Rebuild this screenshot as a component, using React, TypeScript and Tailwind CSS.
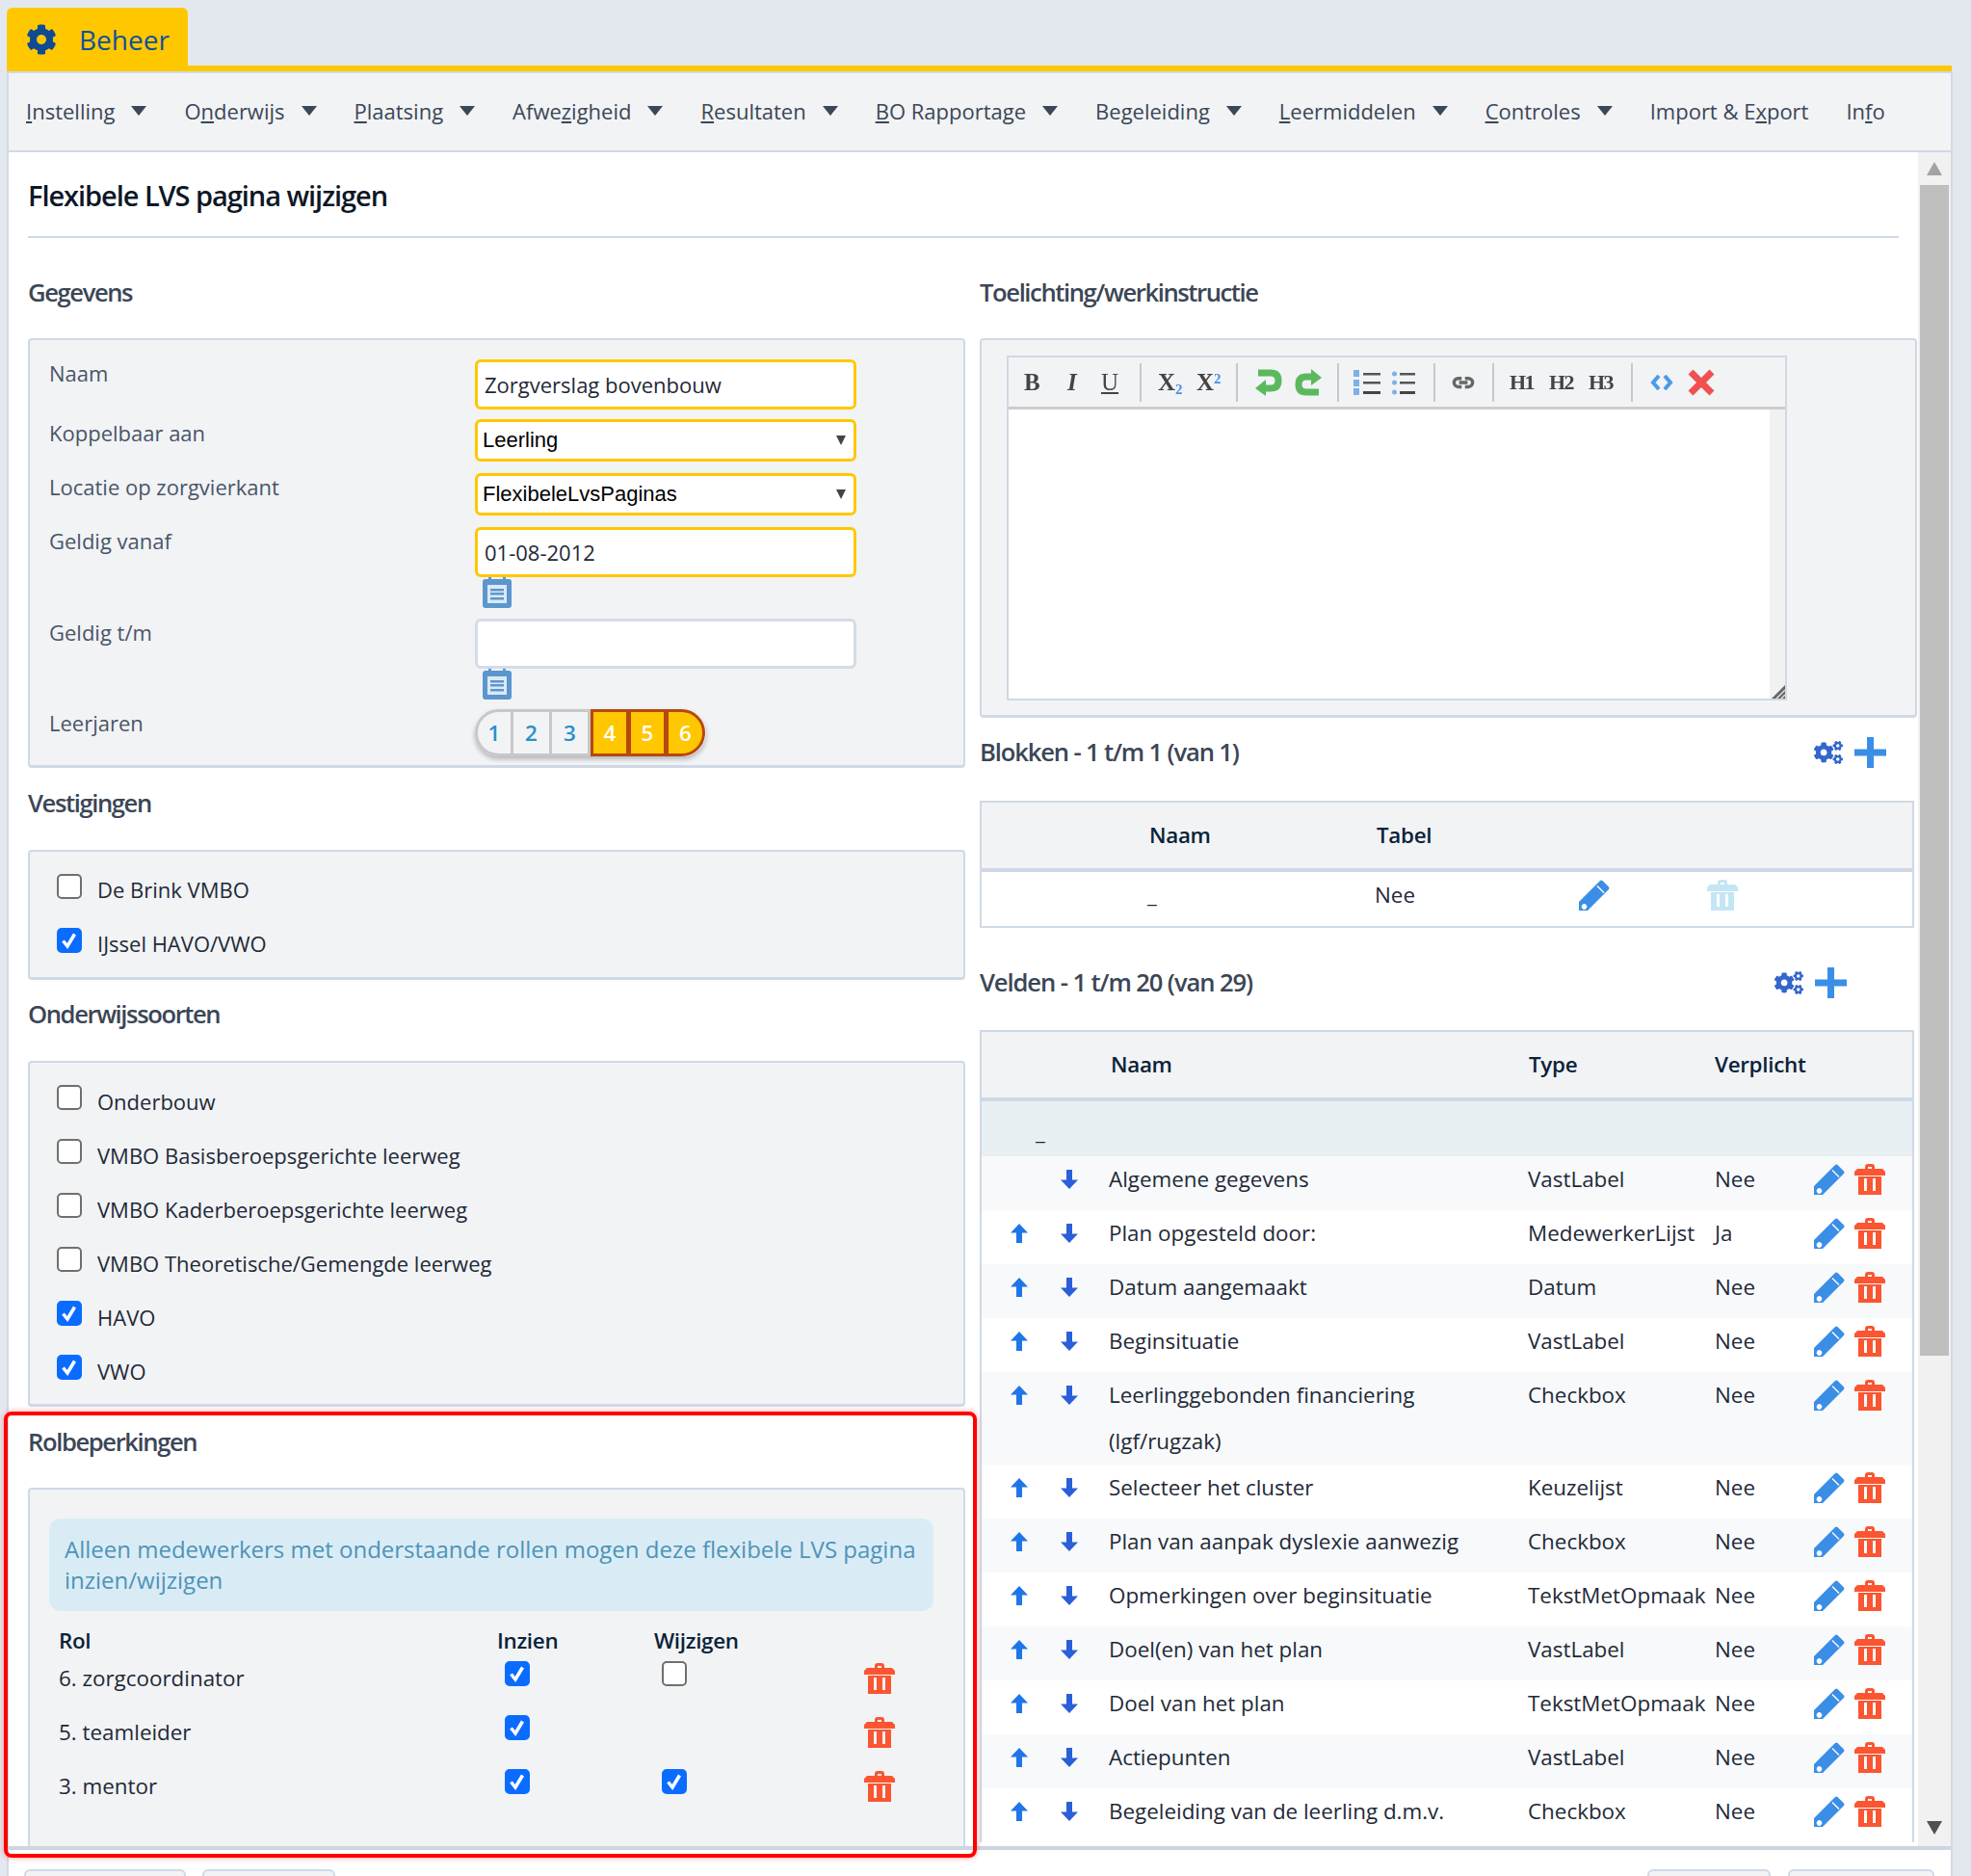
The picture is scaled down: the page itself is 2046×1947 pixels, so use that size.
import { FaCog, FaCogs } from "react-icons/fa";

const navItems = [
  { pre: "", key: "I", post: "nstelling", arrow: true },
  { pre: "O", key: "n", post: "derwijs", arrow: true },
  { pre: "", key: "P", post: "laatsing", arrow: true },
  { pre: "Afwe", key: "z", post: "igheid", arrow: true },
  { pre: "", key: "R", post: "esultaten", arrow: true },
  { pre: "", key: "B", post: "O Rapportage", arrow: true },
  { pre: "Be", key: "g", post: "eleiding", arrow: true },
  { pre: "", key: "L", post: "eermiddelen", arrow: true },
  { pre: "", key: "C", post: "ontroles", arrow: true },
  { pre: "Import & E", key: "x", post: "port", arrow: false },
  { pre: "In", key: "f", post: "o", arrow: false },
];

const velden = [
  { naam: "Algemene gegevens", type: "VastLabel", verplicht: "Nee", noUp: true },
  { naam: "Plan opgesteld door:", type: "MedewerkerLijst", verplicht: "Ja" },
  { naam: "Datum aangemaakt", type: "Datum", verplicht: "Nee" },
  { naam: "Beginsituatie", type: "VastLabel", verplicht: "Nee" },
  { naam: "Leerlinggebonden financiering (lgf/rugzak)", type: "Checkbox", verplicht: "Nee" },
  { naam: "Selecteer het cluster", type: "Keuzelijst", verplicht: "Nee" },
  { naam: "Plan van aanpak dyslexie aanwezig", type: "Checkbox", verplicht: "Nee" },
  { naam: "Opmerkingen over beginsituatie", type: "TekstMetOpmaak", verplicht: "Nee" },
  { naam: "Doel(en) van het plan", type: "VastLabel", verplicht: "Nee" },
  { naam: "Doel van het plan", type: "TekstMetOpmaak", verplicht: "Nee" },
  { naam: "Actiepunten", type: "VastLabel", verplicht: "Nee" },
  { naam: "Begeleiding van de leerling d.m.v.", type: "Checkbox", verplicht: "Nee" },
];

const rollen = [
  { naam: "6. zorgcoordinator", inzien: true, wijzigen: false as boolean | null },
  { naam: "5. teamleider", inzien: true, wijzigen: null },
  { naam: "3. mentor", inzien: true, wijzigen: true },
];

function Trash({ className }: { className: string }) {
  return (
    <svg viewBox="0 0 32 32" className={className}>
      <path
        fill="currentColor"
        fillRule="evenodd"
        d="M11 5V3q0-3 3-3h4q3 0 3 3v2h8l3 3v4H0V8l3-3zM14 5h4V3h-4zM4 13h24v19H4zM10 15v13h3V15zM19 15v13h3V15z"
      />
    </svg>
  );
}

function Pencil({ className }: { className: string }) {
  return (
    <svg viewBox="0 0 32 32" className={className}>
      <path
        fill="currentColor"
        fillRule="evenodd"
        d="M0 32V23L22 1q1-1 2.500 0L31 7.500q1 1.500 0 2.500L9 32zM3 26.500q2.500-2.500 4.500-.5t-.5 4.500q-2 1-3.500-.500T3 26.500zM18.500 7l7 7 1-1-7-7z"
      />
    </svg>
  );
}

function Calendar() {
  return (
    <svg viewBox="0 0 30 32" className="block h-[32px] w-[30px]">
      <path
        fill="#5b96cf"
        d="M3 2h3V0h3v2h12V0h3v2h3q3 0 3 3v24q0 3-3 3H3q-3 0-3-3V5q0-3 3-3z"
      />
      <rect x="5" y="8" width="20" height="19" fill="#dce9f5" />
      <rect x="8" y="12" width="14" height="2.500" fill="#5b96cf" />
      <rect x="8" y="16" width="14" height="2.500" fill="#5b96cf" />
      <rect x="8" y="21" width="14" height="2.500" fill="#5b96cf" />
    </svg>
  );
}

function ArrowUp() {
  return (
    <svg viewBox="0 0 18 20" className="block h-[20px] w-[18px] text-[#1f76e8]">
      <path fill="currentColor" d="M9 0l9 9.500h-6V20H6V9.500H0z" />
    </svg>
  );
}

function ArrowDown() {
  return (
    <svg viewBox="0 0 18 20" className="block h-[20px] w-[18px] text-[#2b5fd9]">
      <path fill="currentColor" d="M9 20L0 10.500h6V0h6v10.500h6z" />
    </svg>
  );
}

function Plus() {
  return (
    <svg viewBox="0 0 33 32" className="block h-[32px] w-[33px] text-[#3a8ee6]">
      <path fill="currentColor" d="M13 0h7v12.500h13v7H20V32h-7V19.500H0v-7h13z" />
    </svg>
  );
}

function Check({ checked }: { checked: boolean }) {
  return (
    <span className="relative block h-[26px] w-[26px] shrink-0">
      <input
        type="checkbox"
        readOnly
        checked={checked}
        className="block h-[26px] w-[26px] appearance-none rounded-[5px] border-2 border-[#6f6f6f] bg-white checked:border-[#0a6cff] checked:bg-[#0a6cff]"
      />
      {checked && (
        <svg viewBox="0 0 26 26" className="pointer-events-none absolute left-0 top-0 h-[26px] w-[26px]">
          <path fill="none" stroke="#fff" strokeWidth="3.500" d="M6.500 13.500l4.500 5.500 7.500-12.500" />
        </svg>
      )}
    </span>
  );
}

function Heading({ children, className }: { children: React.ReactNode; className: string }) {
  return (
    <h2 className={`flex items-center text-[25.6px] font-[550] text-[#3b4656] ${className}`}>
      {children}
    </h2>
  );
}

function Label({ children }: { children: React.ReactNode }) {
  return <div className="-mt-[2px] w-[442px] shrink-0 text-[22px] leading-[32px] text-[#4a5568]">{children}</div>;
}

function SelectField({ value }: { value: string }) {
  return (
    <div className="relative h-[44px] w-[396px]">
      <select
        defaultValue={value}
        className="h-full w-full appearance-none rounded-[6px] border-[3px] border-[#ffc700] bg-white pb-[1px] pl-[5px] font-['Liberation_Sans',sans-serif] text-[22px] text-black"
      >
        <option>{value}</option>
      </select>
      <svg viewBox="0 0 10 10" className="pointer-events-none absolute right-[11px] top-[17px] h-[10px] w-[10px]">
        <path fill="#444" d="M0 0h10L5 10z" />
      </svg>
    </div>
  );
}

function CheckRow({ label, checked, low }: { label: string; checked: boolean; low?: boolean }) {
  return (
    <div className="flex h-[56px] items-center gap-[16px]">
      <div className="-mt-[10px]">
        <Check checked={checked} />
      </div>
      <span className={`text-[22px] text-[#1f2937] ${low ? "-mt-[2px]" : "-mt-[3px]"}`}>{label}</span>
    </div>
  );
}

function Separator() {
  return <div className="h-[40px] w-[2px] bg-[#c8c8c8]" />;
}

function Toolbar() {
  const serif = "font-['Liberation_Serif',serif] text-[25px] text-[#444] leading-none";
  return (
    <div className="flex h-[54px] items-center border-b-[3px] border-[#cccccc] pl-[16px] blur-[0.4px]">
      <span className={`${serif} w-[45px] font-bold`}>B</span>
      <span className={`${serif} w-[35px] font-bold italic`}>I</span>
      <span className={`${serif} w-[40px] underline`}>U</span>
      <Separator />
      <span className={`${serif} ml-[17px] w-[40px] font-bold`}>
        X<sub className="text-[15px] text-[#4a90e2]">2</sub>
      </span>
      <span className={`${serif} w-[41px] font-bold`}>
        X<sup className="text-[15px] text-[#4a90e2]">2</sup>
      </span>
      <Separator />
      <svg viewBox="0 0 28 30" className="ml-[18px] h-[30px] w-[28px]">
        <path fill="none" stroke="#5cb85c" strokeWidth="7" d="M3 5h13q8 0 8 8t-8 8H7" />
        <path fill="#5cb85c" d="M11 12v17L0 21z" />
      </svg>
      <svg viewBox="0 0 28 30" className="ml-[13px] h-[30px] w-[28px]">
        <path fill="none" stroke="#5cb85c" strokeWidth="7" d="M25 25H12q-8 0-8-8t8-8h9" />
        <path fill="#5cb85c" d="M17 1v17l11-8z" />
      </svg>
      <div className="ml-[16px]">
        <Separator />
      </div>
      <svg viewBox="0 0 28 26" className="ml-[15px] h-[26px] w-[28px]">
        <rect x="0" y="0" width="6" height="7" fill="#7db0e8" />
        <rect x="0" y="10" width="6" height="7" fill="#7db0e8" />
        <rect x="0" y="19" width="6" height="7" fill="#7db0e8" />
        <rect x="10" y="3" width="18" height="2.500" fill="#555" />
        <rect x="10" y="12" width="18" height="2.500" fill="#555" />
        <rect x="10" y="22" width="18" height="3" fill="#444" />
      </svg>
      <svg viewBox="0 0 24 26" className="ml-[12px] h-[26px] w-[24px]">
        <circle cx="2.500" cy="4" r="2.500" fill="#7db0e8" />
        <circle cx="2.500" cy="13" r="2.500" fill="#7db0e8" />
        <circle cx="2.500" cy="23" r="2.500" fill="#7db0e8" />
        <rect x="8" y="3" width="16" height="2.500" fill="#555" />
        <rect x="8" y="12" width="16" height="2.500" fill="#555" />
        <rect x="8" y="22" width="16" height="3" fill="#444" />
      </svg>
      <div className="ml-[19px]">
        <Separator />
      </div>
      <svg viewBox="0 0 28 16" className="ml-[16px] h-[14px] w-[26px]">
        <path
          fill="none"
          stroke="#666"
          strokeWidth="4"
          d="M12 3H8a5 5 0 0 0 0 10h4M16 3h4a5 5 0 0 1 0 10h-4M9 8h10"
        />
      </svg>
      <div className="ml-[17px]">
        <Separator />
      </div>
      <div className={`ml-[16px] flex gap-[13px] font-bold tracking-[-1.500px] ${serif}`}>
        <span className="w-[28px] text-[22px]">H1</span>
        <span className="w-[28px] text-[22px]">H2</span>
        <span className="w-[28px] text-[22px]">H3</span>
      </div>
      <div className="ml-[16px]">
        <Separator />
      </div>
      <svg viewBox="0 0 24 16" className="ml-[18px] h-[16px] w-[24px]">
        <path fill="none" stroke="#4a9be8" strokeWidth="4" d="M9 1L3 8l6 7M15 1l6 7-6 7" />
      </svg>
      <svg viewBox="0 0 28 28" className="ml-[15px] h-[28px] w-[28px]">
        <path fill="none" stroke="#f0504f" strokeWidth="7" d="M3 3l22 22M25 3L3 25" />
      </svg>
    </div>
  );
}

function Editor() {
  return (
    <div className="ml-[26px] mt-[16px] w-[810px] border-2 border-[#cfd9e6]">
      <Toolbar />
      <div className="flex h-[300px] bg-white">
        <div className="flex-1" />
        <div className="relative w-[16px] bg-[#f1f1f1]">
          <svg viewBox="0 0 14 14" className="absolute bottom-0 right-0 h-[14px] w-[14px]">
            <path fill="#666" d="M14 0v14H0z" />
            <path stroke="#ddd" strokeWidth="1.500" d="M14 5l-9 9M14 10l-4 4" />
          </svg>
        </div>
      </div>
    </div>
  );
}

function LeerjaarToggle() {
  return (
    <div className="flex h-[49px] w-[240px] rounded-full text-center text-[22.4px] font-semibold leading-[44px] shadow-[0_3px_5px_rgba(0,0,0,0.25)]">
      {[1, 2, 3].map((n) => (
        <div
          key={n}
          className={`h-full w-[40px] border-y-[3px] border-r-[3px] border-[#c8c8c8] bg-[#f1f3f5] text-[#2a8fc9] ${
            n === 1 ? "rounded-l-full border-l-[3px]" : ""
          }`}
        >
          {n}
        </div>
      ))}
      {[4, 5, 6].map((n) => (
        <div
          key={n}
          className={`h-full border-[3px] border-[#b8470f] bg-[#ffc700] text-white ${
            n === 4 ? "w-[40px]" : n === 5 ? "-ml-[1px] w-[40px]" : "-ml-[1px] w-[41px] rounded-r-full"
          }`}
        >
          {n}
        </div>
      ))}
    </div>
  );
}

function LeftColumn() {
  return (
    <div className="w-[973px] shrink-0">
      <Heading className="h-[104px] pt-[10px] tracking-[-1.400px]">Gegevens</Heading>
      <div className="h-[446px] rounded-[4px] border-2 border-b-[3px] border-[#cfd9e6] bg-[#f1f3f5] pl-[20px] pt-[20px]">
        <div className="mb-[10px] flex">
          <Label>Naam</Label>
          <input
            readOnly
            value="Zorgverslag bovenbouw"
            className="h-[52px] w-[396px] rounded-[6px] border-[3px] border-[#ffc700] bg-white px-[7px] text-[22px] text-[#1f2937]"
          />
        </div>
        <div className="mb-[12px] flex">
          <Label>Koppelbaar aan</Label>
          <SelectField value="Leerling" />
        </div>
        <div className="mb-[12px] flex">
          <Label>Locatie op zorgvierkant</Label>
          <SelectField value="FlexibeleLvsPaginas" />
        </div>
        <div className="mb-[11px] flex">
          <Label>Geldig vanaf</Label>
          <div>
            <input
              readOnly
              value="01-08-2012"
              className="block h-[52px] w-[396px] rounded-[6px] border-[3px] border-[#ffc700] bg-white px-[7px] text-[22px] text-[#1f2937]"
            />
            <div className="pl-[8px]">
              <Calendar />
            </div>
          </div>
        </div>
        <div className="mb-[10px] flex">
          <Label>Geldig t/m</Label>
          <div>
            <input
              readOnly
              value=""
              className="block h-[52px] w-[396px] rounded-[6px] border-[3px] border-[#d3dce8] bg-white px-[7px] text-[22px]"
            />
            <div className="pl-[8px]">
              <Calendar />
            </div>
          </div>
        </div>
        <div className="flex">
          <Label>Leerjaren</Label>
          <LeerjaarToggle />
        </div>
      </div>

      <Heading className="h-[85px] pb-[11px] tracking-[-1.400px]">Vestigingen</Heading>
      <div className="h-[135px] rounded-[4px] border-2 border-b-[3px] border-[#cfd9e6] bg-[#f1f3f5] pl-[28px] pt-[13px]">
        <CheckRow label="De Brink VMBO" checked={false} />
        <CheckRow label="IJssel HAVO/VWO" checked={true} />
      </div>

      <Heading className="h-[84px] pb-[12px] tracking-[-1.400px]">Onderwijssoorten</Heading>
      <div className="h-[359px] rounded-[4px] border-2 border-b-[3px] border-[#cfd9e6] bg-[#f1f3f5] pl-[28px] pt-[13px]">
        <CheckRow low label="Onderbouw" checked={false} />
        <CheckRow low label="VMBO Basisberoepsgerichte leerweg" checked={false} />
        <CheckRow low label="VMBO Kaderberoepsgerichte leerweg" checked={false} />
        <CheckRow low label="VMBO Theoretische/Gemengde leerweg" checked={false} />
        <CheckRow low label="HAVO" checked={true} />
        <CheckRow low label="VWO" checked={true} />
      </div>

      <Heading className="h-[84px] pb-[10px] tracking-[-1.400px]">Rolbeperkingen</Heading>
      <div className="h-[400px] rounded-[4px] border-2 border-[#cfd9e6] bg-[#f1f3f5] pl-[20px] pt-[30px]">
        <div className="h-[96px] w-[918px] rounded-[12px] bg-[#d9ecf5] px-[16px] py-[16px] text-[24px] leading-[32px] text-[#4f93b8]">
          Alleen medewerkers met onderstaande rollen mogen deze flexibele LVS pagina inzien/wijzigen
        </div>
        <div className="mt-[19px] flex h-[24px] items-center pl-[10px] text-[22.4px] font-[550] tracking-[-0.3px] text-[#0b2239]">
          <div className="w-[455px]">Rol</div>
          <div className="w-[163px]">Inzien</div>
          <div>Wijzigen</div>
        </div>
        {rollen.map((rol) => (
          <div key={rol.naam} className="flex h-[56px] pl-[10px] text-[22.4px] text-[#1f2937]">
            <div className="w-[455px] pt-[11px] leading-[32px]">{rol.naam}</div>
            <div className="w-[163px] pl-[8px] pt-[9px]">
              <Check checked={rol.inzien} />
            </div>
            <div className="w-[218px] pl-[8px] pt-[9px]">
              {rol.wijzigen !== null && <Check checked={rol.wijzigen} />}
            </div>
            <div className="pt-[11px]">
              <Trash className="block h-[32px] w-[32px] text-[#fc5531]" />
            </div>
          </div>
        ))}
      </div>
    </div>
  );
}

function ActionIcons({ right }: { right: string }) {
  return (
    <div className={`flex items-center gap-[12px] ${right}`}>
      <FaCogs className="h-[30px] w-[30px] text-[#3366cc]" />
      <Plus />
    </div>
  );
}

function RightColumn() {
  return (
    <div className="w-[973px] shrink-0">
      <Heading className="h-[104px] pt-[10px] tracking-[-1.400px]">Toelichting/werkinstructie</Heading>
      <div className="h-[394px] rounded-[4px] border-2 border-b-[3px] border-[#cfd9e6] bg-[#f1f3f5]">
        <Editor />
      </div>

      <div className="flex h-[86px] items-center justify-between pb-[14px]">
        <Heading className="tracking-[-1.150px]">Blokken - 1 t/m 1 (van 1)</Heading>
        <ActionIcons right="mr-[32px]" />
      </div>
      <div className="h-[132px] w-[970px] border-2 border-[#cfd9e6]">
        <div className="flex h-[68px] items-center bg-[#f1f3f5] pl-[174px] text-[22.4px] font-[550] tracking-[-0.3px] text-[#0b2239]">
          <div className="w-[236px]">Naam</div>
          <div>Tabel</div>
        </div>
        <div className="flex h-[60px] border-t-[4px] border-[#cfd9e6] bg-white text-[22.4px] leading-[32px] text-[#1f2937]">
          <div className="w-[408px] pl-[172px] pt-[8px]">_</div>
          <div className="w-[212px] pt-[8px]">Nee</div>
          <div className="w-[133px] pt-[8px]">
            <Pencil className="block h-[32px] w-[32px] text-[#3a8ee6]" />
          </div>
          <div className="pt-[8px]">
            <Trash className="block h-[32px] w-[32px] text-[#c3e6f5]" />
          </div>
        </div>
      </div>

      <div className="flex h-[106px] items-center justify-between pt-[8px]">
        <Heading className="tracking-[-1.100px]">Velden - 1 t/m 20 (van 29)</Heading>
        <ActionIcons right="mr-[73px]" />
      </div>
      <div className="w-[970px] border-x-2 border-t-2 border-[#cfd9e6]">
        <div className="flex h-[68px] items-center bg-[#f1f3f5] pl-[134px] text-[22.4px] font-[550] tracking-[-0.3px] text-[#0b2239]">
          <div className="w-[434px] shrink-0">Naam</div>
          <div className="w-[193px] shrink-0">Type</div>
          <div>Verplicht</div>
        </div>
        <div className="h-[61px] border-t-[4px] border-[#cfd9e6] bg-[#e8eff3] pl-[56px] pt-[16px] text-[22.4px] leading-[32px] text-[#1f2937]">
          _
        </div>
        {velden.map((veld, i) => (
          <div
            key={veld.naam}
            className={`flex min-h-[56px] text-[22.4px] leading-[48px] text-[#1f2937] ${i % 2 === 0 ? "bg-[#f7f9fb]" : "bg-white"}`}
          >
            <div className="flex w-[132px] shrink-0 pl-[30px] pt-[14px]">
              <div className="w-[52px]">{!veld.noUp && <ArrowUp />}</div>
              <ArrowDown />
            </div>
            <div className="w-[435px] shrink-0 pr-[40px]">{veld.naam}</div>
            <div className="w-[194px] shrink-0">{veld.type}</div>
            <div className="w-[103px] shrink-0">{veld.verplicht}</div>
            <div className="flex gap-[10px] pt-[8px]">
              <Pencil className="block h-[32px] w-[32px] text-[#3a8ee6]" />
              <Trash className="block h-[32px] w-[32px] text-[#fc5531]" />
            </div>
          </div>
        ))}
      </div>
    </div>
  );
}

function Scrollbar() {
  return (
    <div className="flex w-[34px] shrink-0 flex-col bg-[#f1f1f1]">
      <div className="flex h-[34px] items-center justify-center">
        <svg viewBox="0 0 16 14" className="h-[14px] w-[16px]">
          <path fill="#a3a3a3" d="M8 0l8 14H0z" />
        </svg>
      </div>
      <div className="mx-[2px] h-[1215px] bg-[#bfbfbf]" />
      <div className="flex flex-1 items-end justify-center pb-[12px]">
        <svg viewBox="0 0 16 14" className="h-[14px] w-[16px]">
          <path fill="#505050" d="M0 0h16L8 14z" />
        </svg>
      </div>
    </div>
  );
}

export default function App() {
  return (
    <div className="relative h-[1947px] w-[2046px] overflow-hidden bg-[#e3e8ef] font-['Open_Sans',sans-serif]">
      <div className="flex h-[68px] items-end pl-[7px]">
        <div className="flex h-[60px] w-[188px] items-center gap-[23px] rounded-t-[6px] bg-[#ffc700] pl-[20px] pt-[5px] text-[28px] text-[#10509c]">
          <FaCog className="h-[32px] w-[32px] text-[#0f4a92]" />
          <span>Beheer</span>
        </div>
      </div>
      <div className="ml-[7px] w-[2019px] border-t-[6px] border-[#ffc700]" />

      <div className="ml-[7px] flex h-[1873px] w-[2020px] flex-col border-x-2 border-[#d0dae6] border-t-2">
        <nav className="flex h-[82px] shrink-0 items-center gap-[39px] border-b-2 border-[#cfd9e6] bg-[#f1f3f5] pb-[2px] pl-[18px] text-[22px] text-[#3b4656]">
          {navItems.map((item) => (
            <div key={item.pre + item.key} className="flex items-center gap-[17px]">
              <span>
                {item.pre}
                <u>{item.key}</u>
                {item.post}
              </span>
              {item.arrow && (
                <svg viewBox="0 0 16 10" className="h-[10px] w-[16px]">
                  <path fill="#3b4656" d="M0 0h16L8 10z" />
                </svg>
              )}
            </div>
          ))}
        </nav>

        <div className="flex min-h-0 flex-1">
          <main className="min-w-0 flex-1 overflow-hidden bg-white pl-[20px]">
            <div className="flex h-[87px] items-center pt-[3px] text-[29px] font-[550] tracking-[-1.050px] text-[#0d1726]">
              Flexibele LVS pagina wijzigen
            </div>
            <div className="h-[2px] w-[1942px] bg-[#cfd9e6]" />
            <div className="flex gap-[15px]">
              <LeftColumn />
              <RightColumn />
            </div>
          </main>
          <Scrollbar />
        </div>

        <footer className="flex h-[31px] shrink-0 justify-between border-t-4 border-[#ccd6e0] bg-white pl-[16px] pr-[17px] pt-[20px]">
          <div className="flex gap-[17px]">
            <div className="h-[20px] w-[168px] rounded-t-[6px] border-2 border-[#cfd9e6] bg-[#f1f3f5]" />
            <div className="h-[20px] w-[138px] rounded-t-[6px] border-2 border-[#cfd9e6] bg-[#f1f3f5]" />
          </div>
          <div className="flex gap-[18px]">
            <div className="h-[20px] w-[128px] rounded-t-[6px] border-2 border-[#cfd9e6] bg-[#f1f3f5]" />
            <div className="h-[20px] w-[152px] rounded-t-[6px] border-2 border-[#cfd9e6] bg-[#f1f3f5]" />
          </div>
        </footer>
      </div>

      <div className="pointer-events-none absolute left-[4px] top-[1465px] h-[463px] w-[1010px] rounded-[8px] border-4 border-[#ff0000] shadow-[0_0_6px_rgba(255,0,0,0.35)]" />
    </div>
  );
}
